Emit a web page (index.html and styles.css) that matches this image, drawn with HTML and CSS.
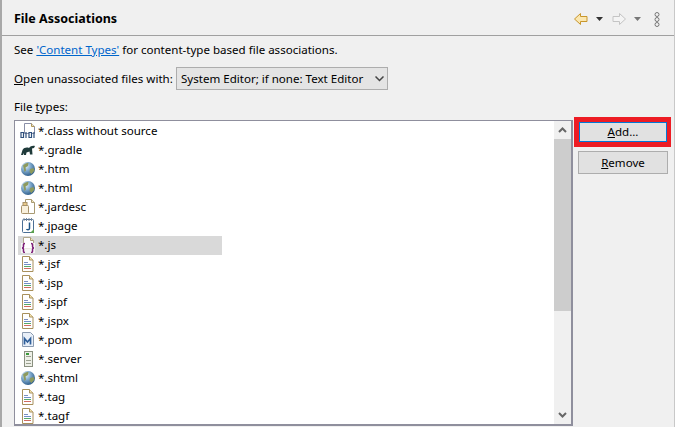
FILE: index.html
```html
<!DOCTYPE html>
<html lang="en">
<head>
<meta charset="utf-8">
<title>File Associations</title>
<link rel="stylesheet" href="styles.css">
</head>
<body>
<svg class="defs" width="0" height="0" aria-hidden="true">
  <defs>
    <radialGradient id="globe" cx="35%" cy="30%" r="75%">
      <stop offset="0" stop-color="#e2eff8"/><stop offset=".45" stop-color="#7fa9cc"/><stop offset="1" stop-color="#2a5a88"/>
    </radialGradient>
    <symbol id="doc" viewBox="0 0 16 16">
      <path d="M2.500 .5h7l3.500 3.500v11.500h-10.500z" fill="#fff" stroke="#a8905c"/>
      <path d="M9.500 .5v3.500h3.500" fill="#f4e3ae" stroke="#a8905c"/>
      <path d="M4 6.500h4" stroke="#7c8ec0"/>
      <path d="M4 8.500h7" stroke="#6f8fc8"/>
      <path d="M4 10.500h7" stroke="#58a868"/>
      <path d="M4 12.500h7" stroke="#d06a60"/>
    </symbol>
    <symbol id="web" viewBox="0 0 16 16">
      <circle cx="8" cy="8" r="7" fill="url(#globe)"/>
      <path d="M3 4.500C5 2.500 6.500 2 8.500 2l-.5 3-2.500 1.500.5 3L4.500 11zM10 8l3.500-1 1 2.500-3 3.500-2-2z" fill="#8c9a5e"/>
    </symbol>
  </defs>
</svg>
<main class="page">
  <header class="head">
    <h1 class="title">File Associations</h1>
    <nav class="tools">
      <svg class="ic" width="16" height="16" viewBox="0 0 16 16"><path d="M1.500 8l6-5.500v3h6.500v5H7.500v3z" fill="#fbe7b0" stroke="#c8962c"/></svg>
      <svg class="caret" width="7" height="4" viewBox="0 0 7 4"><path d="M0 0h7L3.500 4z" fill="#333"/></svg>
      <svg class="ic" width="16" height="16" viewBox="0 0 16 16"><path d="M14.500 8l-6-5.500v3H2v5h6.500v3z" fill="#f4f4f4" stroke="#c4c4c4"/></svg>
      <svg class="caret" width="7" height="4" viewBox="0 0 7 4"><path d="M0 0h7L3.500 4z" fill="#777"/></svg>
      <svg class="ic menu" width="6" height="15" viewBox="0 0 6 15"><g fill="none" stroke="#777"><circle cx="3" cy="2.500" r="2"/><circle cx="3" cy="7.500" r="2"/><circle cx="3" cy="12.500" r="2"/></g></svg>
    </nav>
  </header>
  <div class="body">
    <p class="see">See <a href="#" class="link">'Content Types'</a> for content-type based file associations.</p>
    <div class="open">
      <label class="open-label"><u>O</u>pen unassociated files with:</label>
      <div class="combo"><span>System Editor; if none: Text Editor</span>
        <svg width="9" height="6" viewBox="0 0 9 6"><path d="M.5.500l4 4 4-4" fill="none" stroke="#444" stroke-width="1.500"/></svg>
      </div>
    </div>
    <div class="caption">File <u>t</u>ypes:</div>
    <div class="lower">
      <div class="list">
        <ul class="rows">
          <li><svg class="fi" viewBox="0 0 16 16"><path d="M4.500 .5h7l3 3v7h-10z" fill="#fff" stroke="#8a8fa8"/><path d="M11.500 .5v3h3" fill="#f1e6c2" stroke="#b0985c"/><path d="M1 9.500h2.500v5H1zM6 9v6M9 9.500h2.500v5H9zM14 9v6" fill="#fff" stroke="#2d4f7c" stroke-width="1.200"/></svg><span>*.class without source</span></li>
          <li><svg class="fi" viewBox="0 0 16 16"><path d="M1 13l1.500-5C4 5.500 7 5 9 6c1.500-2 3.500-2.500 6-2l-1 2-2 .500.500 6H10l-.5-3-3 1L6 13H4l-.5-2L3 13z" fill="#1f3a3a"/></svg><span>*.gradle</span></li>
          <li><svg class="fi"><use href="#web"/></svg><span>*.htm</span></li>
          <li><svg class="fi"><use href="#web"/></svg><span>*.html</span></li>
          <li><svg class="fi" viewBox="0 0 16 16"><path d="M5.500 .5h6l3 3v11h-9z" fill="#fff" stroke="#a89a72"/><path d="M11.500 .5v3h3" fill="#f3e6bd" stroke="#a89a72"/><rect x="1.500" y="6.500" width="7" height="8" rx="1" fill="#f8f0dc" stroke="#a8926a"/><rect x="3" y="3.500" width="4" height="3" fill="#e8c98a" stroke="#a8926a"/></svg><span>*.jardesc</span></li>
          <li><svg class="fi" viewBox="0 0 16 16"><rect x="2.500" y="1.500" width="11" height="13" rx="1" fill="#fff" stroke="#4b6f96"/><path d="M4 0v3M6.500 0v3M9 0v3M11.500 0v3" stroke="#78889a"/><path d="M9.500 4.500v6c0 1.500-2.500 1.500-3 .5" fill="none" stroke="#1f5688" stroke-width="1.500"/><path d="M10 15l4-4v4z" fill="#5aa04e"/></svg><span>*.jpage</span></li>
          <li class="sel"><svg class="fi" viewBox="0 0 16 16"><path d="M3.500 .5h7l3 3v8h-10z" fill="#fff" stroke="#b0a88c"/><path d="M10.500 .5v3h3" fill="#f3e6bd" stroke="#a89a72"/><rect x="1" y="6" width="14" height="10" fill="#fff" opacity=".75"/><path d="M5 6.500C3 6.500 3.500 8 3.500 9.500S3 11 2 11c1 0 1.500.5 1.500 1.500S3 15.500 5 15.500M11 6.500c2 0 1.500 1.500 1.500 3S13 11 14 11c-1 0-1.500.5-1.500 1.500s.5 3-1.500 3" fill="none" stroke="#7d1f78" stroke-width="1.500"/></svg><span>*.js</span></li>
          <li><svg class="fi"><use href="#doc"/></svg><span>*.jsf</span></li>
          <li><svg class="fi"><use href="#doc"/></svg><span>*.jsp</span></li>
          <li><svg class="fi"><use href="#doc"/></svg><span>*.jspf</span></li>
          <li><svg class="fi"><use href="#doc"/></svg><span>*.jspx</span></li>
          <li><svg class="fi" viewBox="0 0 16 16"><path d="M2.500 .5h8l3 3v11h-11z" fill="#e8eff8" stroke="#8a9ab0"/><path d="M4.500 12.500V6.500l3 3.500 3-3.500v6" fill="none" stroke="#2f5f9a" stroke-width="1.700"/></svg><span>*.pom</span></li>
          <li><svg class="fi" viewBox="0 0 16 16"><rect x="4.500" y=".5" width="8" height="15" fill="#eef0e8" stroke="#8a9080"/><path d="M6 5.500h5M6 9.500h5M6 12.500h5" stroke="#9aa090"/><rect x="6" y="2" width="3" height="2" fill="#3a9a3a"/></svg><span>*.server</span></li>
          <li><svg class="fi"><use href="#web"/></svg><span>*.shtml</span></li>
          <li><svg class="fi"><use href="#doc"/></svg><span>*.tag</span></li>
          <li><svg class="fi"><use href="#doc"/></svg><span>*.tagf</span></li>
        </ul>
        <div class="scroll">
          <svg class="arrow" width="9" height="6" viewBox="0 0 9 6"><path d="M1 5l3.500-3.500L8 5" fill="none" stroke="#666" stroke-width="2"/></svg>
          <div class="track"><div class="thumb"></div></div>
          <svg class="arrow" width="9" height="6" viewBox="0 0 9 6"><path d="M1 1l3.500 3.500L8 1" fill="none" stroke="#666" stroke-width="2"/></svg>
        </div>
      </div>
      <div class="side">
        <div class="hl"><button class="btn focus" type="button"><u>A</u>dd...</button></div>
        <button class="btn" type="button"><u>R</u>emove</button>
      </div>
    </div>
  </div>
</main>
</body>
</html>
```
FILE: styles.css
```css
html, body {
  margin: 0;
  padding: 0;
  height: 100%;
  overflow: hidden;
}
body {
  background: #f0f0f0;
  color: #000;
  font: 11.55px/16px "Noto Sans", "Open Sans", sans-serif;
}
.defs { position: absolute; }
.page {
  height: 427px;
  box-sizing: border-box;
  border-left: 2px solid #a8a8a8;
  border-right: 1px solid #c8c8c8;
  display: flex;
  flex-direction: column;
}
.head {
  height: 36px;
  box-sizing: border-box;
  border-bottom: 1px solid #a0a0a0;
  display: flex;
  align-items: center;
  justify-content: space-between;
  padding: 3px 14px 0 12px;
}
.title {
  margin: 0;
  font-size: 12.5px;
  font-weight: 700;
}
.tools {
  display: flex;
  align-items: center;
}
.caret { margin: 0 8px 0 7px; }
.menu { margin-left: 5px; }
.body {
  flex: 1;
  min-height: 0;
  display: flex;
  flex-direction: column;
  padding: 5px 0 1px 12px;
}
.see { margin: 0 0 8px; height: 18px; line-height: 18px; }
.link { color: #0066cc; }
.open {
  display: flex;
  align-items: center;
  height: 23px;
}
.open-label { width: 162px; flex: none; }
.combo {
  width: 212px;
  height: 23px;
  box-sizing: border-box;
  border: 1px solid #adadad;
  background: #e4e4e4;
  display: flex;
  align-items: center;
  justify-content: space-between;
  padding: 0 3px 0 4px;
}
.caption { margin-top: 9px; height: 16px; }
.lower {
  flex: 1;
  min-height: 0;
  margin-top: 5px;
  display: flex;
  gap: 5px;
}
.list {
  flex: none;
  width: 559px;
  box-sizing: border-box;
  border: 2px solid #8f8f9d;
  border-width: 1px 2px 2px 1px;
  background: #fff;
  display: flex;
  min-height: 0;
}
.rows {
  flex: 1;
  margin: 0;
  padding: 1px 0 0 3px;
  list-style: none;
  overflow: hidden;
}
.rows li {
  width: 204px;
  height: 19px;
  display: flex;
  align-items: center;
  gap: 2px;
  padding: 0 0 2px 2px;
  box-sizing: border-box;
}
.rows .sel { background: #d9d9d9; }
.fi { width: 16px; height: 16px; flex: none; }
.scroll {
  width: 17px;
  background: #f0f0f0;
  display: flex;
  flex-direction: column;
  align-items: center;
}
.arrow { flex: none; margin: 6px 0; }
.track { flex: 1; width: 100%; min-height: 0; }
.thumb { height: 172px; background: #cdcdcd; }
.side {
  flex: none;
  width: 90px;
  display: flex;
  flex-direction: column;
  gap: 4px;
}
.hl {
  margin: -3px -3px 0 -4px;
  background: #ed1c24;
  padding: 5px 4px 5px 5px;
  height: 30px;
  box-sizing: border-box;
  display: flex;
}
.btn {
  height: 23px;
  margin: 0;
  padding: 0;
  box-sizing: border-box;
  border: 1px solid #adadad;
  background: #e1e1e1;
  color: #000;
  font: inherit;
}
.focus {
  flex: 1;
  height: 20px;
  border: 1px dotted #0a0a0a;
  outline: 1px solid #0078d7;
  outline-offset: -1px;
  line-height: 16px;
}
```
